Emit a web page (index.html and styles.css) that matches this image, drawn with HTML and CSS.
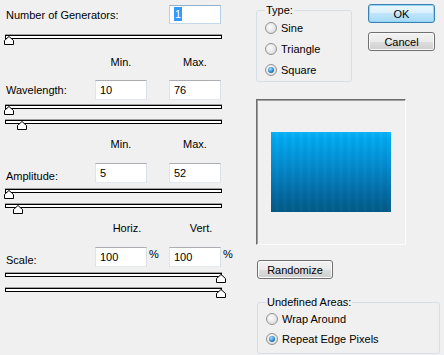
FILE: index.html
```
<!DOCTYPE html>
<html lang="en">
<head>
    <meta charset="UTF-8">
    <title>Wave</title>
    <link rel="stylesheet" href="styles.css">
</head>
<body>
    <div class="dialog">
        <div class="params">
            <div class="grid row gen">
                <span class="label wide">Number of Generators:</span>
                <span class="field focus"><span class="sel">1</span></span>
            </div>
            <div class="slider gen-slider">
                <div class="track"></div>
                <svg class="thumb" style="left:-1px" width="10" height="9" viewBox="0 0 10 9"><path d="M0.5 8.5V4.5L5 0.5L9.5 4.5V8.5Z"/></svg>
            </div>

            <div class="block first">
                <div class="grid heads">
                    <span class="head c2">Min.</span>
                    <span class="head c4">Max.</span>
                </div>
                <div class="grid row">
                    <span class="label">Wavelength:</span>
                    <span class="field">10</span>
                    <span></span>
                    <span class="field">76</span>
                </div>
                <div class="slider">
                    <div class="track"></div>
                    <svg class="thumb" style="left:-1px" width="10" height="9" viewBox="0 0 10 9"><path d="M0.5 8.5V4.5L5 0.5L9.5 4.5V8.5Z"/></svg>
                </div>
                <div class="slider">
                    <div class="track"></div>
                    <svg class="thumb" style="left:12px" width="10" height="9" viewBox="0 0 10 9"><path d="M0.5 8.5V4.5L5 0.5L9.5 4.5V8.5Z"/></svg>
                </div>
            </div>

            <div class="block">
                <div class="grid heads">
                    <span class="head c2">Min.</span>
                    <span class="head c4">Max.</span>
                </div>
                <div class="grid row">
                    <span class="label low">Amplitude:</span>
                    <span class="field">5</span>
                    <span></span>
                    <span class="field">52</span>
                </div>
                <div class="slider">
                    <div class="track"></div>
                    <svg class="thumb" style="left:-1px" width="10" height="9" viewBox="0 0 10 9"><path d="M0.5 8.5V4.5L5 0.5L9.5 4.5V8.5Z"/></svg>
                </div>
                <div class="slider">
                    <div class="track"></div>
                    <svg class="thumb" style="left:8px" width="10" height="9" viewBox="0 0 10 9"><path d="M0.5 8.5V4.5L5 0.5L9.5 4.5V8.5Z"/></svg>
                </div>
            </div>

            <div class="block">
                <div class="grid heads shifted">
                    <span class="head c2">Horiz.</span>
                    <span class="head c4">Vert.</span>
                </div>
                <div class="grid row">
                    <span class="label low">Scale:</span>
                    <span class="field">100</span>
                    <span class="pct">%</span>
                    <span class="field">100</span>
                    <span class="pct">%</span>
                </div>
                <div class="slider">
                    <div class="track"></div>
                    <svg class="thumb" style="left:211px" width="10" height="9" viewBox="0 0 10 9"><path d="M0.5 8.5V4.5L5 0.5L9.5 4.5V8.5Z"/></svg>
                </div>
                <div class="slider">
                    <div class="track"></div>
                    <svg class="thumb" style="left:211px" width="10" height="9" viewBox="0 0 10 9"><path d="M0.5 8.5V4.5L5 0.5L9.5 4.5V8.5Z"/></svg>
                </div>
            </div>
        </div>

        <div class="side">
            <div class="top">
                <fieldset class="box type">
                    <legend>Type:</legend>
                    <label class="opt"><span class="radio"></span>Sine</label>
                    <label class="opt"><span class="radio"></span>Triangle</label>
                    <label class="opt"><span class="radio on"><span class="dot"></span></span>Square</label>
                </fieldset>
                <div class="buttons">
                    <button class="btn default">OK</button>
                    <button class="btn">Cancel</button>
                </div>
            </div>

            <div class="preview">
                <div class="wave-img"></div>
            </div>

            <button class="btn randomize">Randomize</button>

            <fieldset class="box undef">
                <legend>Undefined Areas:</legend>
                <label class="opt"><span class="radio"></span>Wrap Around</label>
                <label class="opt"><span class="radio on"><span class="dot"></span></span>Repeat Edge Pixels</label>
            </fieldset>
        </div>
    </div>
</body>
</html>
```

FILE: styles.css
```
body {
    margin: 0;
    background: #f0f0f0;
    font-family: "Liberation Sans", Arial, sans-serif;
    font-size: 11px;
    color: #000;
}

.dialog {
    display: flex;
    width: 444px;
    height: 355px;
    overflow: hidden;
}

/* left column */

.params {
    width: 228px;
    padding: 5px 0 0 5px;
}

.grid {
    display: grid;
    grid-template-columns: 90px 52px 22px 52px 12px;
    align-items: center;
}

.row {
    height: 20px;
    margin-top: 12px;
}

.row.gen {
    height: 19px;
    margin-top: 0;
}

.label {
    padding-left: 1px;
}

.label.wide {
    grid-column: 1 / 4;
}

.label.low {
    padding-top: 5px;
}

.row.gen .field {
    grid-column: 4;
}

.field {
    box-sizing: border-box;
    height: 100%;
    padding: 0 4px;
    line-height: 18px;
    background: #fff;
    border: 1px solid;
    border-color: #abadb3 #dbdfe6 #e3e9ef #e2e3ea;
}

.field.focus {
    border-color: #8fb0cf #b7cfe6 #c5d9ec #b7cfe6;
    padding-top: 1px;
    line-height: 14px;
}

.sel {
    display: inline-block;
    height: 14px;
    padding: 0 1px;
    background: #3399ff;
    color: #fff;
}

.pct {
    align-self: start;
    padding: 1px 0 0 2px;
}

.heads {
    height: 13px;
    line-height: 13px;
    margin-top: 8px;
}

.head {
    text-align: center;
}

.c2 { grid-column: 2; }
.c4 { grid-column: 4; }

.heads.shifted .head {
    padding-left: 12px;
}

.slider {
    position: relative;
    width: 217px;
    height: 10px;
    margin-top: 6px;
}

.slider + .slider {
    margin-top: 5px;
}

.gen-slider {
    margin-top: 11px;
}

.track {
    box-sizing: border-box;
    height: 4px;
    margin-top: 1px;
    background: #fff;
    border: 1px solid #000;
    box-shadow: 0 -1px 0 #a0a0a0;
}

.thumb {
    position: absolute;
    top: 1px;
}

.thumb path {
    fill: #fff;
    stroke: #000;
    stroke-width: 1;
}

.block.first {
    margin-top: 11px;
}

.block.first .heads {
    margin-top: 0;
}

.block.first .row {
    margin-top: 11px;
}

.block.first .row + .slider {
    margin-top: 5px;
}

/* right column */

.side {
    width: 184px;
    margin-left: 23px;
    padding-top: 4px;
}

.top {
    display: flex;
    align-items: flex-start;
}

.box {
    box-sizing: border-box;
    margin: 0;
    min-width: 0;
    padding: 0 0 1px 8px;
    border: 1px solid #d5dfe5;
    border-radius: 3px;
}

.box legend {
    padding: 0 1px;
    line-height: 13px;
}

.type {
    width: 96px;
}

.opt {
    display: flex;
    align-items: center;
    gap: 4px;
    height: 21px;
}

.radio {
    box-sizing: border-box;
    display: flex;
    align-items: center;
    justify-content: center;
    width: 12px;
    height: 12px;
    border: 1px solid #939393;
    border-radius: 50%;
    background: radial-gradient(circle at 40% 40%, #fdfdfd, #e4e4e4 60%, #cfcfcf);
}

.dot {
    width: 6px;
    height: 6px;
    border-radius: 50%;
    background: radial-gradient(circle at 40% 35%, #a9e2ff, #2b86c6 55%, #0d4c7e);
}

.buttons {
    display: flex;
    flex-direction: column;
    gap: 9px;
    margin-left: 16px;
}

.btn {
    box-sizing: border-box;
    display: block;
    width: 67px;
    height: 19px;
    padding: 0;
    font: inherit;
    color: #000;
    border: 1px solid #707070;
    border-radius: 3px;
    background: linear-gradient(#f2f2f2, #ebebeb 50%, #dddddd 50%, #cfcfcf);
    box-shadow: inset 0 0 0 1px #fbfbfb;
}

.btn.default {
    border-color: #3c7fb1;
    background: linear-gradient(#eaf6fd, #d9f0fc 50%, #bee6fd 50%, #a7d9f5);
    box-shadow: inset 0 0 0 1px #8fd6f8;
}

.preview {
    box-sizing: border-box;
    display: flex;
    align-items: center;
    justify-content: center;
    width: 150px;
    height: 146px;
    margin-top: 17px;
    border: 1px solid;
    border-color: #6d6d6d #fcfcfc #fcfcfc #6d6d6d;
    box-shadow: inset 1px 1px 0 #a0a0a0;
}

.wave-img {
    width: 120px;
    height: 80px;
    background:
        repeating-linear-gradient(90deg, rgba(0, 0, 0, 0.025) 0 4px, rgba(255, 255, 255, 0.015) 4px 8px),
        linear-gradient(#0eb4fb, #00a8f0 8%, #0488cb 45%, #036aa2 78%, #025a86);
}

.randomize {
    width: 76px;
    margin: 15px 0 0 1px;
}

.undef {
    width: 183px;
    margin: 17px 0 0 1px;
    padding-bottom: 4px;
}

.undef .opt {
    height: 20px;
}
```
